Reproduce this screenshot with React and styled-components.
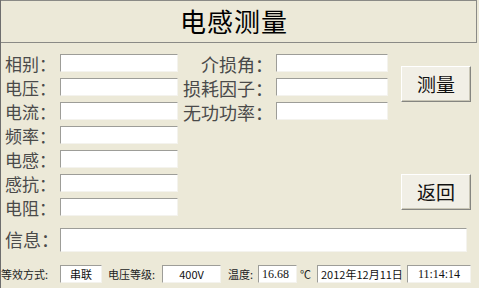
import React from "react";
import styled, { createGlobalStyle } from "styled-components";

const GlobalStyle = createGlobalStyle`
  html, body {
    margin: 0;
    padding: 0;
    background: #ece9d8;
  }
`;

const Window = styled.div`
  width: 479px;
  height: 288px;
  box-sizing: border-box;
  background: #ece9d8;
  border-left: 1px solid #6e6e6e;
  font-family: "Noto Sans CJK SC", "Liberation Sans", sans-serif;
  overflow: hidden;
`;

const Header = styled.div`
  width: 476px;
  height: 43px;
  box-sizing: border-box;
  border: 1px solid #8a8a86;
  border-left: none;
  display: flex;
  align-items: center;
  justify-content: center;
`;

const Title = styled.h1`
  margin: 0 0 2px -9px;
  font-size: 26px;
  font-weight: 400;
  color: #000;
  letter-spacing: 1px;
  line-height: 1;
`;

const Form = styled.div`
  display: grid;
  grid-template-columns: 59px 118px 98px 112px 13px 70px;
  grid-template-rows: repeat(7, 24px);
  padding-top: 10px;
`;

const Label = styled.div`
  grid-column: ${(p) => p.col};
  grid-row: ${(p) => p.row};
  font-size: ${(p) => p.size || 17}px;
  color: #4a4a4a;
  line-height: 1;
  display: flex;
  align-items: center;
  justify-content: ${(p) => (p.right ? "flex-end" : "flex-start")};
  padding-left: ${(p) => (p.right ? 0 : 4)}px;
  padding-right: ${(p) => (p.right ? 3 : 0)}px;
  padding-bottom: 3px;
  white-space: nowrap;
`;

const Field = styled.div`
  grid-column: ${(p) => p.col};
  grid-row: ${(p) => p.row};
  align-self: start;
  margin-top: 1px;
  height: 18px;
  box-sizing: border-box;
  background: #fff;
  border-top: 1px solid #9d9d98;
  border-left: 1px solid #9d9d98;
  border-right: 1px solid #f4f3ee;
  border-bottom: 1px solid #f4f3ee;
`;

const Button = styled.button`
  grid-column: 6;
  grid-row: ${(p) => p.rows};
  align-self: start;
  margin-top: ${(p) => p.offset}px;
  width: 70px;
  height: 36px;
  background: #f1efe6;
  border-top: 1px solid #ffffff;
  border-left: 1px solid #ffffff;
  border-right: 1px solid #858580;
  border-bottom: 1px solid #858580;
  box-shadow: inset -1px -1px 0 #c9c6b6;
  font-family: "Noto Sans CJK SC", sans-serif;
  font-size: 19px;
  color: #111;
  padding: 0 0 2px;
  line-height: 1;
`;

const InfoRow = styled.div`
  display: flex;
  align-items: center;
  height: 24px;
  margin-top: 7px;
`;

const InfoLabel = styled.div`
  width: 59px;
  padding: 0 0 3px 4px;
  box-sizing: border-box;
  font-size: 18px;
  color: #4a4a4a;
  white-space: nowrap;
  line-height: 1;
`;

const InfoField = styled.div`
  width: 407px;
  height: 24px;
  box-sizing: border-box;
  background: #fff;
  border-top: 1px solid #9d9d98;
  border-left: 1px solid #9d9d98;
  border-right: 1px solid #f4f3ee;
  border-bottom: 1px solid #f4f3ee;
`;

const StatusBar = styled.div`
  display: flex;
  align-items: center;
  height: 18px;
  margin-top: 13px;
  font-size: 11px;
  color: #222;
`;

const StatusLabel = styled.span`
  width: ${(p) => p.w}px;
  box-sizing: border-box;
  white-space: nowrap;
  padding-left: ${(p) => p.pl || 0}px;
`;

const StatusBox = styled.div`
  width: ${(p) => p.w}px;
  height: 18px;
  box-sizing: border-box;
  background: #fff;
  border-top: 1px solid #9d9d98;
  border-left: 1px solid #9d9d98;
  border-right: 1px solid #f4f3ee;
  border-bottom: 1px solid #f4f3ee;
  display: flex;
  align-items: center;
  justify-content: ${(p) => p.align || "center"};
  padding: 0 3px;
  margin-left: ${(p) => p.ml || 0}px;
  font-size: ${(p) => (p.serif ? 12 : 11)}px;
  font-family: ${(p) =>
    p.serif ? `"Liberation Serif", serif` : `"Noto Sans CJK SC", "Liberation Sans", sans-serif`};
  color: #111;
  white-space: nowrap;
`;

const leftRows = ["相别：", "电压：", "电流：", "频率：", "电感：", "感抗：", "电阻："];
const rightRows = ["介损角：", "损耗因子：", "无功功率："];

export default function App() {
  return (
    <Window>
      <GlobalStyle />
      <Header>
        <Title>电感测量</Title>
      </Header>
      <Form>
        {leftRows.map((t, i) => (
          <React.Fragment key={t}>
            <Label col={1} row={i + 1}>{t}</Label>
            <Field col={2} row={i + 1} />
          </React.Fragment>
        ))}
        {rightRows.map((t, i) => (
          <React.Fragment key={t}>
            <Label col={3} row={i + 1} size={18} right>{t}</Label>
            <Field col={4} row={i + 1} />
          </React.Fragment>
        ))}
        <Button rows="1 / 3" offset={13}>测量</Button>
        <Button rows="6 / 8" offset={1}>返回</Button>
      </Form>
      <InfoRow>
        <InfoLabel>信息：</InfoLabel>
        <InfoField />
      </InfoRow>
      <StatusBar>
        <StatusLabel w={59}>等效方式:</StatusLabel>
        <StatusBox w={42}>串联</StatusBox>
        <StatusLabel w={60} pl={6}>电压等级:</StatusLabel>
        <StatusBox w={59}>400V</StatusBox>
        <StatusLabel w={37} pl={7}>温度:</StatusLabel>
        <StatusBox w={39} align="flex-start" serif>16.68</StatusBox>
        <StatusLabel w={20} pl={3}>℃</StatusLabel>
        <StatusBox w={84} align="flex-start">2012年12月11日</StatusBox>
        <StatusBox w={64} ml={6} serif>11:14:14</StatusBox>
      </StatusBar>
    </Window>
  );
}
